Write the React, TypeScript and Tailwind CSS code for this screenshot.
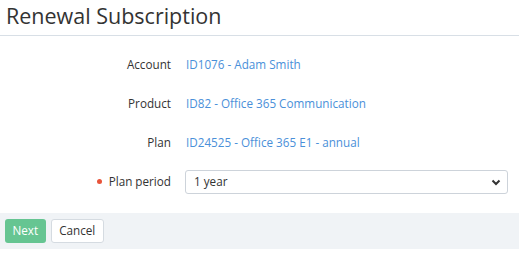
import React from 'react';

const rows = [
  { label: 'Account', value: 'ID1076 - Adam Smith' },
  { label: 'Product', value: 'ID82 - Office 365 Communication' },
  { label: 'Plan', value: 'ID24525 - Office 365 E1 - annual' },
];

export default function App() {
  return (
    <div className="w-[519px] h-[255px] bg-white font-['Open_Sans',sans-serif] text-[#333]">
      {/* Header */}
      <div className="h-[36px] border-b border-[#d8dfe6] px-[6px] flex items-center">
        <h1 className="text-[21.5px] leading-none text-[#333] -mt-[4px]">Renewal Subscription</h1>
      </div>

      {/* Form */}
      <div className="pt-[17px] pr-[11px] flex flex-col gap-[15px]">
        {rows.map((r) => (
          <div key={r.label} className="flex items-center h-6">
            <div className="w-[171px] text-right text-[11.7px] text-[#333]">{r.label}</div>
            <a className="ml-[15px] text-[11.7px] text-[#4a90d9]">{r.value}</a>
          </div>
        ))}
        <div className="flex items-center h-6">
          <div className="w-[171px] flex justify-end items-center text-[11.7px] text-[#333]">
            <span className="w-[5px] h-[5px] rounded-full bg-[#e8543a] mr-[7px]" />
            Plan period
          </div>
          <div className="ml-[14px] flex-1 h-6 border border-[#cdd3da] rounded-[3px] flex items-center justify-between pl-[8px] pr-[6px]">
            <span className="text-[11.7px] text-[#333]">1 year</span>
            <svg width="10" height="7" viewBox="0 0 10 7">
              <path d="M1.5 1.5 L5 5 L8.5 1.5" fill="none" stroke="#333" strokeWidth="2" />
            </svg>
          </div>
        </div>
      </div>

      {/* Footer */}
      <div className="mt-[19px] bg-[#f0f3f6] h-9 px-[5px] flex items-center gap-[5px]">
        <button className="h-6 px-[7.5px] rounded-[3px] bg-[#66c592] text-white text-[11.7px]">Next</button>
        <button className="h-6 px-[7.5px] rounded-[3px] bg-white border border-[#d5dbe1] text-[#333] text-[11.7px]">Cancel</button>
      </div>
    </div>
  );
}
